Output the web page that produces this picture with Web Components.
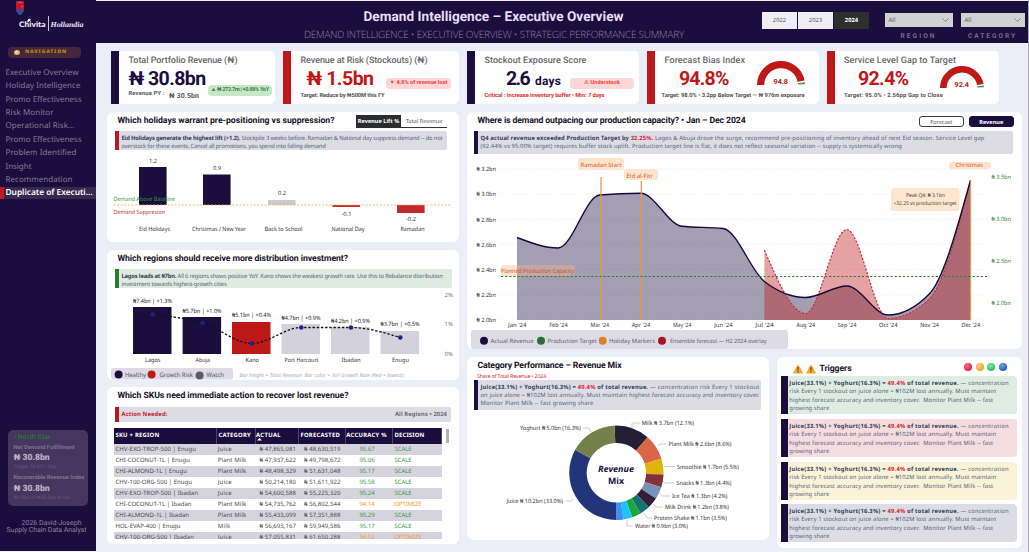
<!DOCTYPE html>
<html lang="en">
<head>
<meta charset="utf-8">
<title>Demand Intelligence - Executive Overview</title>
<style>
  html, body { margin: 0; height: 100%; }
  body {
    --navy: #1c0d3f;
    --red: #be1818;
    --head: Roboto, "Liberation Sans", sans-serif;
    --text: "Noto Sans", "Open Sans", sans-serif;
    background: #ebeef7;
    font-family: var(--text);
    font-size: 6px;
    overflow: hidden;
    text-rendering: geometricPrecision;
  }
</style>
</head>
<body>
<dash-app></dash-app>

<script>
const define = (name, html, setup) => {
  const template = document.createElement("template");
  template.innerHTML = html;
  customElements.define(name, class extends HTMLElement {
    constructor() {
      super();
      this._shadowRoot = this.attachShadow({ mode: "open" });
    }
    connectedCallback() {
      this._shadowRoot.replaceChildren(template.content.cloneNode(true));
      if (setup) setup(this, this._shadowRoot);
    }
  });
};

// svg text: x, baseline, label, width, extra attributes
const label = (x, y, str, w, extra = "") =>
  `<text x="${x}" y="${y}" textLength="${w}" lengthAdjust="spacingAndGlyphs" ${extra}>${str}</text>`;
const rect = (x, y, x2, y2, fill, extra = "") =>
  `<rect x="${x}" y="${y}" width="${x2 - x}" height="${y2 - y}" fill="${fill}" ${extra}/>`;
const line = (x, y, x2, y2, stroke, extra = "") =>
  `<line x1="${x}" y1="${y}" x2="${x2}" y2="${y2}" stroke="${stroke}" ${extra}/>`;

// monotone cubic through the points
const curve = (pts) => {
  const n = pts.length,
    d = [],
    m = [];
  for (let i = 0; i < n - 1; i++) {
    d.push((pts[i + 1][1] - pts[i][1]) / (pts[i + 1][0] - pts[i][0]));
  }
  for (let i = 1; i < n - 1; i++) {
    const a = d[i - 1], b = d[i];
    m[i] = a * b <= 0 ? 0 : Math.sign(a) * Math.min(Math.abs(a), Math.abs(b), Math.abs(a + b) / 4) * 2;
  }
  m[0] = (3 * d[0] - m[1]) / 2;
  m[n - 1] = (3 * d[n - 2] - m[n - 2]) / 2;
  let path = `M${pts[0]}`;
  for (let i = 0; i < n - 1; i++) {
    const h = (pts[i + 1][0] - pts[i][0]) / 3;
    path += `C${pts[i][0] + h},${pts[i][1] + m[i] * h} ${pts[i + 1][0] - h},${pts[i + 1][1] - m[i + 1] * h} ${pts[i + 1]}`;
  }
  return path;
};

const chartStyle = `<style>
  :host { display: block; font: 5.8px var(--text); }
  svg { display: block; overflow: visible; }
</style>`;

define("side-nav", `
  <style>
    :host { display: flex; flex-direction: column; width: 96px; height: 551px; background: var(--navy); color: #827b94; }
    .logo { display: block; height: 47px; }
    .tag {
      display: flex; align-items: center; gap: 5px; width: 67px; height: 11px; margin-left: 8px; padding-left: 6px;
      border-radius: 4px; background: #46263d; color: #b98d12; font: 900 5px/11px var(--text);
    }
    .dot { width: 6px; height: 5px; border-radius: 50%; background: radial-gradient(circle at 40% 40%, #ffe1a0, #cf8e35); }
    nav { margin-top: 8px; font-size: 8px; line-height: 13.37px; }
    nav div { height: 13.37px; padding-left: 5.5px; }
    nav .active { display: flex; box-sizing: border-box; height: 12px; margin-top: 1px; padding-left: 1.5px; border-left: 4px solid #c5161d; background: #35294f; color: #fff; font: 600 8.4px/12px var(--text); }
    .star {
      margin: auto 8px 0; box-sizing: border-box; height: 76px; padding: 2px 5.5px; border-radius: 5px;
      background: #46365f; color: #7d7190; font: 700 5.8px/8px var(--head);
    }
    .star b { display: block; color: #b9b1c5; font-size: 8.6px; line-height: 12px; }
    .star .name { height: 12px; line-height: 10px; color: #27752f; font-size: 6.8px; }
    .star .sub { height: 10px; color: #645479; font-weight: 400; font-size: 5px; line-height: 7px; }
    footer { position: relative; margin: 14px 0 9px; height: 22px; font: 7px/7.2px var(--head); color: #8b849b; }
    footer i { position: absolute; left: 10px; top: 2px; width: 7px; height: 7px; border-radius: 50%; background: #170a32; }
  </style>
  <div class="logo">
    <svg width="96" height="47">
      <path d="M16 1h8v8l-1 3h-6l-1-3z" fill="#c3162b"/><path d="M17 9q3 2 6 0l1 2-3 4h-2l-3-4z" fill="#314b9c"/>
      <path d="M18 2h4v1h-4M21 6h2v1h-2" fill="#df5360"/>
      <path d="M27.3 23c0-3 1.5-5 2.2-3.8 1.8-.8 1.7 1.6 0 1.8z" fill="#fff"/>
      <text x="19" y="27" textLength="26.5" lengthAdjust="spacingAndGlyphs" font-family="Lato" font-size="7.6" font-weight="900" fill="#f3f0f7">Chivita</text>
      <path d="M48.5 16v15" stroke="#c9c4d2"/>
      <text x="50.5" y="27" textLength="33" lengthAdjust="spacingAndGlyphs" font-family="Liberation Serif" font-size="7.5" font-style="italic" font-weight="bold" fill="#eeeaf3">Hollandia</text>
    </svg>
  </div>
  <div class="tag"><span class="dot"></span><fit-text w="42">NAVIGATION</fit-text></div>
  <nav>
    <div><fit-text w="73">Executive Overview</fit-text></div>
    <div><fit-text w="75">Holiday Intelligence</fit-text></div>
    <div><fit-text w="76">Promo Effectiveness</fit-text></div>
    <div><fit-text w="48">Risk Monitor</fit-text></div>
    <div><fit-text w="69">Operational Risk...</fit-text></div>
    <div><fit-text w="76">Promo Effectiveness</fit-text></div>
    <div><fit-text w="71">Problem Identified</fit-text></div>
    <div><fit-text w="26">Insight</fit-text></div>
    <div><fit-text w="67">Recommendation</fit-text></div>
    <div class="active"><fit-text w="87">Duplicate of Executi...</fit-text></div>
  </nav>
  <div class="star">
    <div class="name"><fit-text w="37">• North Star</fit-text></div>
    <fit-text w="61">Net Demand Fulfillment</fit-text>
    <b><fit-text w="36">₦ 30.8bn</fit-text></b>
    <div class="sub"><fit-text w="44">Target: 98.0% • Gap:</fit-text></div>
    <fit-text w="71">Recoverable Revenue Index</fit-text>
    <b style="margin-top:1px"><fit-text w="36">₦ 30.8bn</fit-text></b>
    <div class="sub"><fit-text w="57">₦1.5bn of ₦30.8bn at risk</fit-text></div>
  </div>
  <footer><i></i>
    <fit-text w="60" style="margin-left:21.5px">2026 David-Joseph</fit-text>
    <fit-text w="80" style="margin-left:6.5px">Supply Chain Data Analyst</fit-text>
  </footer>
`);

define("app-header", `
  <style>
    :host { display: flex; height: 43px; box-sizing: border-box; border-top: 1px solid #eee; background: var(--navy); }
    .titles { margin-left: 208px; width: 458px; }
    .title { padding: 7px 0 0 59.5px; font: 700 13.6px/18px var(--head); color: #e5dff2; }
    .sub { font: 300 10px/16px "Open Sans", var(--text); color: #8b839e; }
    .years { display: flex; gap: 1px; height: 16.5px; margin-top: 11px; }
    .years span { width: 35px; background: #f0eef5; color: #555; font: 5.8px/16.5px var(--text); text-align: center; }
    .years span:last-child { background: #2e2e2e; color: #fff; font-weight: 700; }
    .field { width: 68px; margin: 12px 0 0 15.5px; text-align: center; }
    .field + .field { width: 64px; margin-left: 8px; }
    .select { display: flex; justify-content: space-between; align-items: center; height: 14px; padding: 0 4px; background: #d1d1d1; color: #555; }
    .name { margin-top: 5px; font: 700 6.6px/8px var(--head); color: #786e8c; display: flex; justify-content: center; }
  </style>
  <div class="titles">
    <div class="title"><fit-text w="260">Demand Intelligence – Executive Overview</fit-text></div>
    <div class="sub"><fit-text w="380">DEMAND INTELLIGENCE • EXECUTIVE OVERVIEW • STRATEGIC PERFORMANCE SUMMARY</fit-text></div>
  </div>
  <div class="years"><span>2022</span><span>2023</span><span>2024</span></div>
  <div class="field">
    <div class="select">All<svg width="7" height="4"><path d="M.5.5l3 3 3-3" fill="none" stroke="#777" stroke-width=".8"/></svg></div>
    <div class="name"><fit-text w="36">REGION</fit-text></div>
  </div>
  <div class="field">
    <div class="select">All<svg width="7" height="4"><path d="M.5.5l3 3 3-3" fill="none" stroke="#777" stroke-width=".8"/></svg></div>
    <div class="name"><fit-text w="49">CATEGORY</fit-text></div>
  </div>
`);

define("kpi-card", `
  <style>
    :host {
      position: relative; display: block; box-sizing: border-box; height: 53px; padding: 4px 0 0 9.5px;
      border-left: 8px solid var(--tone, var(--navy)); border-radius: 0 5px 5px 0; background: #fff; color: #555;
    }
    .title { font: 500 9px/12px var(--head); color: #686868; }
    .row { display: flex; align-items: center; height: 24px; font: 700 19.5px/24px var(--head); color: var(--tone, var(--navy)); }
    .foot { display: flex; font: 700 5.8px/10px var(--head); color: var(--foot, #555); }
    ::slotted(kpi-gauge) { position: absolute; }
  </style>
  <div class="title"><slot name="title"></slot></div>
  <div class="row"><slot></slot></div>
  <div class="foot"><slot name="foot"></slot></div>
  <slot name="gauge"></slot>
`);

define("kpi-badge", `
  <style>
    :host {
      display: flex; justify-content: center; align-items: center; height: 11px; border-radius: 4px;
      background: #fdd7d7; color: #ee3a3a; font: 700 5.5px/11px var(--head);
    }
  </style>
  <slot></slot>
`);

define("kpi-gauge", `<style>:host { display: block; } svg { display: block; overflow: visible; }</style><svg></svg>`, (el, root) => {
  const r = +el.getAttribute("r"),
    val = el.getAttribute("value"),
    band = r * 0.3,
    mid = r - band / 2,
    svg = root.querySelector("svg"),
    at = (p) => [r - mid * Math.cos(p * Math.PI), r - mid * Math.sin(p * Math.PI)];
  svg.setAttribute("width", r * 2);
  svg.setAttribute("height", r);
  svg.innerHTML = `
    <path d="M${at(0)}A${mid} ${mid} 0 0 1 ${at(0.94)}" fill="none" stroke="#c01717" stroke-width="${band}"/>
    <path d="M${at(0.965)}A${mid} ${mid} 0 0 1 ${at(0.99)}" fill="none" stroke="#519452" stroke-width="${band}"/>
    ${label(r - 7.5, r - 1.5, val, 14.5, 'font-family="Roboto" font-weight="700" font-size="7" fill="#be1818"')}`;
});

define("dash-panel", `
  <style>
    :host { display: block; box-sizing: border-box; border-radius: 6px; background: #fff; overflow: hidden; }
    header { display: flex; justify-content: space-between; height: var(--head-height, 19px); padding: 0 12px 0 10.5px; box-sizing: border-box; }
    .title { font: 700 8.7px/19px var(--head); color: #16121f; }
    .tools { display: flex; }
  </style>
  <header><div class="title"><slot name="title"></slot></div><div class="tools"><slot name="tools"></slot></div></header>
  <slot></slot>
`);

define("toggle-pair", `
  <style>
    :host { display: flex; font: 5.6px/12px var(--text); text-align: center; }
    .on { width: 45px; background: #2b2c2e; color: #fff; font-weight: 700; }
    .off { width: 46px; box-sizing: border-box; border-bottom: 1px solid #333; color: #555; }
    :host([pill]) { gap: 4.5px; line-height: 9.5px; }
    :host([pill]) span { box-sizing: border-box; width: 45.5px; height: 11px; border: 1px solid #3b3e46; border-radius: 3px; padding-top: 1px; }
    :host([pill]) .on { background: var(--navy); border-color: var(--navy); }
  </style>
  <slot></slot>
`, (el, root) => {
  root.querySelector("slot").remove();
  el.getAttribute("items").split(",").forEach((item, i) => {
    const span = document.createElement("span");
    span.textContent = item;
    span.className = i === +el.getAttribute("active") ? "on" : "off";
    root.append(span);
  });
});

define("insight-note", `
  <style>
    :host {
      display: block; box-sizing: border-box; margin-left: 8px; padding: 2.5px 0 0 2.5px;
      border-left: 4px solid var(--bar, var(--navy)); border-radius: 0 2px 2px 0;
      background: var(--fill, #dddce5); color: #52627a; font: 5.8px/8.3px var(--text);
    }
  </style>
  <slot></slot>
`);

define("lift-chart", chartStyle + `<svg width="352" height="92" viewBox="107 150 352 92"></svg>`, (el, root) => {
  const bars = [
    [139, 167, 205, "Eid Holidays", 139, 31, "1.2", 163, "#1c0d3f"],
    [203, 174.5, 205, "Christmas / New Year", 192, 54, "0.9", 170, "#1c0d3f"],
    [268, 200, 205, "Back to School", 264.5, 38, "0.2", 195, "#cacace"],
    [332.5, 205, 207, "National Day", 331.5, 33, "-0.1", 216, "#c32a2e"],
    [397, 205, 213, "Ramadan", 400.5, 24, "-0.2", 221, "#c32a2e"],
  ];
  root.querySelector("svg").innerHTML = bars.map(([x, y, y2, name, tx, w, val, ty, fill]) =>
    rect(x, y, x + 27.6, y2, fill) +
    label(tx, 231, name, w, 'fill="#333"') +
    `<text x="${x + 14}" y="${ty}" text-anchor="middle" fill="#444">${val}</text>`
  ).join("") +
    line(113.5, 205, 452, 205, "#f3b45f", 'stroke-dasharray="2 1.6" stroke-width=".9"') +
    label(113.5, 201, "Demand Above Baseline", 61.5, 'fill="#3c9148"') +
    label(113.5, 214, "Demand Suppresion", 51.5, 'fill="#c8313a"');
});

define("region-chart", chartStyle + `<svg width="352" height="92" viewBox="107 288 352 92"></svg>`, (el, root) => {
  const bars = [
    [133, 307, "Lagos", 145, 15.5, "₦7.4bn | +1.3%", 303, "#1c0d3f"],
    [182.6, 317, "Abuja", 195.5, 14.5, "₦5.7bn | +1.0%", 313, "#1c0d3f"],
    [232, 322, "Kano", 245.5, 13.5, "₦5.1bn | +0.4%", 317, "#be1818"],
    [281.5, 324, "Port Harcourt", 284.5, 34, "₦4.7bn | +0.9%", 320.3, "#d3d1dc"],
    [331, 327, "Ibadan", 341.5, 19, "₦4.2bn | +0.9%", 323.3, "#d3d1dc"],
    [380.6, 331, "Enugu", 392, 17, "₦3.7bn | +0.5%", 326.3, "#d3d1dc"],
  ];
  const pts = [[152.7, 314.5], [202.5, 323], [252, 343.5], [301.3, 327.5], [351, 327.5], [400.3, 337.5]];
  root.querySelector("svg").innerHTML = bars.map(([x, y, name, tx, w, val, ty, fill]) =>
    rect(x, y, x + 38.5, 354, fill) +
    label(tx, 362, name, w, 'fill="#333"') +
    label(x, ty, val, 39, 'fill="#222"')
  ).join("") +
    `<path d="${curve(pts)}" fill="none" stroke="#111" stroke-width="1.3" stroke-dasharray="2.4 1.8"/>` +
    pts.map(([x, y]) => `<circle cx="${x}" cy="${y}" r="2.3" fill="#1a2587"/>`).join("") +
    label(444.5, 297, "2%", 8.5, 'fill="#777"') + label(444.5, 326, "1%", 8.5, 'fill="#777"') + label(444.5, 356, "0%", 8.5, 'fill="#777"') +
    rect(111, 368, 233, 379.5, "#dddce6", 'rx="3"') +
    `<circle cx="118.6" cy="374.5" r="4" fill="#1c0d3f"/><circle cx="151.6" cy="374.5" r="4" fill="#be1818"/><circle cx="199.6" cy="375.5" r="4" fill="#5c5b62"/>` +
    label(125, 377.3, "Healthy", 21, 'fill="#555" font-size="6.2"') +
    label(159.5, 377.3, "Growth Risk", 33.5, 'fill="#555" font-size="6.2"') +
    label(206.5, 377.3, "Watch", 17.5, 'fill="#555" font-size="6.2"') +
    label(239.5, 377, "Bar height = Total Revenue. Bar color = YoY Growth Rate (Red = lowest)", 164, 'fill="#aaa" font-style="italic" font-size="5.2"');
});

define("sku-table", `
  <style>
    :host { display: flex; gap: 3.5px; height: 111px; margin: 6px 0 0 6.5px; overflow: hidden; font: 6px/11.04px var(--text); color: #4a4a4a; }
    .grid { width: 328.5px; }
    .row { display: grid; grid-template-columns: 103px 39px 43px 47px 47px 49.5px; height: 11.04px; }
    .row:nth-child(even) { background: #d5d3dd; }
    .head { position: relative; height: 16px; background: var(--navy); color: #fff; font: 700 5.9px/14px var(--text); }
    .head svg { position: absolute; left: 143.5px; top: 10px; }
    .head > div { border-right: 1px solid #51426c; box-sizing: border-box; }
    .row > div { padding-left: 2px; }
    .row .num { display: flex; justify-content: flex-end; padding-right: 2.5px; }
    .row .acc { display: flex; justify-content: center; padding: 0 4px 0 0; }
    .ok { color: #3f9a47; }
    .warn { color: #f0a125; }
    .thumb { width: 3px; height: 14px; margin-top: 1px; background: #b5b2b5; }
  </style>
  <div class="grid">
    <div class="row head">
      <div><fit-text w="44">SKU + REGION</fit-text></div><div><fit-text w="32.5">CATEGORY</fit-text></div>
      <div style="padding-left:.5px"><fit-text w="25">ACTUAL</fit-text></div><div><fit-text w="39.5">FORECASTED</fit-text></div>
      <div style="padding-left:.8px"><fit-text w="40.5">ACCURACY %</fit-text></div><div><fit-text w="30">DECISION</fit-text></div>
      <svg width="5" height="3"><path d="M0 2.5L2.5 0 5 2.5z" fill="#fff"/></svg>
    </div>
  </div>
  <div class="thumb"></div>
`, (el, root) => {
  const rows = [
    ["CHV-EXO-TROP-500 | Enugu", 80.5, "Juice", "47,865,081", "48,630,519", "95.67"],
    ["CHI-COCONUT-1L | Enugu", 74.5, "Plant Milk", "47,937,622", "49,798,672", "95.06"],
    ["CHI-ALMOND-1L | Enugu", 71.5, "Plant Milk", "48,498,329", "51,631,048", "95.17"],
    ["CHV-100-ORG-500 | Enugu", 76.5, "Juice", "50,214,180", "51,611,922", "95.58"],
    ["CHV-EXO-TROP-500 | Ibadan", 82.5, "Juice", "54,600,588", "55,225,320", "95.24"],
    ["CHI-COCONUT-1L | Ibadan", 76, "Plant Milk", "54,735,762", "56,802,544", "94.14"],
    ["CHI-ALMOND-1L | Ibadan", 73.5, "Plant Milk", "55,433,099", "57,351,888", "95.29"],
    ["HOL-EVAP-400 | Enugu", 65, "Milk", "56,693,167", "59,949,586", "95.17"],
    ["CHV-100-ORG-500 | Ibadan", 78.5, "Juice", "57,055,831", "61,650,288", "94.52"],
  ];
  const widths = { Juice: 14, "Plant Milk": 28.5, Milk: 12.5 };
  root.querySelector(".grid").insertAdjacentHTML("beforeend", rows.map(([sku, w, cat, act, fc, acc]) => {
    const cls = acc < 95 ? "warn" : "ok";
    return `<div class="row">
      <div><fit-text w="${w}">${sku}</fit-text></div>
      <div style="padding-left:1.3px"><fit-text w="${widths[cat]}">${cat}</fit-text></div>
      <div class="num"><fit-text w="36.5">₦ ${act}</fit-text></div>
      <div class="num" style="padding-right:5px"><fit-text w="36.5">₦ ${fc}</fit-text></div>
      <div class="acc ${cls}"><fit-text w="15">${acc}</fit-text></div>
      <div class="${cls}">${cls === "ok" ? '<fit-text w="17">SCALE</fit-text>' : '<fit-text w="27">OPTIMIZE</fit-text>'}</div>
    </div>`;
  }).join(""));
});

define("demand-chart", chartStyle + `<svg width="555" height="195" viewBox="467 154 555 195"></svg>`, (el, root) => {
  const months = ["Jan", "Feb", "Mar", "Apr", "May", "Jun", "Jul", "Aug", "Sep", "Oct", "Nov", "Dec"];
  const x = (i) => 517 + i * 41.23;
  const actual = [237.5, 248, 195, 193.3, 226.3, 228.5, 281.5, 297.5, 286, 315, 294, 180].map((y, i) => [x(i), y]);
  const forecast = [250, 313.5, 229.5, 318.5, 299, 181].map((y, i) => [x(i + 6), y]);
  const pill = (a, b, c, d, fill = "#fde5cd") => rect(a, b, c, d, fill, 'rx="3"');
  let out = "";
  ["3.2", "3.0", "2.8", "2.6", "2.4", "2.2", "2.0"].forEach((v, i) => {
    const y = 169 + i * 25.15;
    out += line(500, y, 987, y, "#dedee2", 'stroke-dasharray="1 2" stroke-width=".6"') +
      label(476.5, y + 2.2, `₦ ${v}bn`, 19.5, 'fill="#333"');
  });
  ["3.5", "3.0", "2.5", "2.0"].forEach((v, i) => {
    out += label(991.5, 179.2 + i * 42, `₦ ${v}bn`, 19.5, 'fill="#35863c"');
  });
  out += `<path d="${curve(actual)}V320H517z" fill="#1c0d3f" fill-opacity=".4"/>
    <path d="${curve(forecast)}V320H${x(6)}z" fill="#c01c20" fill-opacity=".41"/>
    <path d="${curve(forecast)}" fill="none" stroke="#c7303a" stroke-width="1.2" stroke-dasharray="2.2 1.5"/>
    <path d="${curve(actual)}" fill="none" stroke="#160a3b" stroke-width="1.4"/>`;
  out += line(601, 177, 601, 320, "#e59a46", 'stroke-width="1.3"') +
    line(641.3, 181, 641.3, 320, "#e59a46", 'stroke-width="1.3"') +
    line(970.7, 180, 970.7, 320, "#e8a045", 'stroke-width="1"') +
    pill(578, 158, 624, 170) + label(580.5, 167, "Ramadan Start", 41, 'fill="#d3562f"') +
    pill(624, 169, 658, 180) + label(626.5, 178, "Eid al-Fitr", 26.5, 'fill="#d3562f"') +
    pill(949, 162, 991, 169.3) + label(955.5, 167.3, "Christmas", 27.5, 'fill="#d3562f"') +
    rect(501, 265, 575, 276, "#f5b58a", 'rx="3" fill-opacity=".38"') +
    label(501, 273.3, "Planned Production Capacity", 73, 'fill="#cc5136"') +
    line(501, 276.5, 987, 276.5, "#347a3a", 'stroke-dasharray="2.3 1.8"') +
    pill(891, 188, 959.5, 211, "#fce6ce") +
    label(906, 197, "Peak Q4: ₦ 3.1bn", 39, 'fill="#444" font-size="5.2"') +
    label(893.5, 205.3, "+32.25 vs production target", 63, 'fill="#444" font-size="5.2"');
  months.forEach((m, i) => {
    out += label(x(i) - 9, 327, `${m} '24`, 18.5, 'fill="#333"');
  });
  out += rect(471, 330, 788, 349, "#dddce6", 'rx="3"');
  [["Actual Revenue", 484, 490.5, 43, "#1c0d3f"], ["Production Target", 541, 547.5, 49.5, "#2c6e37"],
    ["Holiday Markers", 602.7, 609, 46, "#d88325"], ["Ensemble forecast — H2 2024 overlay", 662, 670, 96.5, "#a9151c"]
  ].forEach(([name, cx, tx, w, fill]) => {
    out += `<circle cx="${cx}" cy="340.8" r="4" fill="${fill}"/>` + label(tx, 343.2, name, w, 'fill="#5d5d66"');
  });
  root.querySelector("svg").innerHTML = out;
});

define("mix-chart", chartStyle + `<svg width="302" height="130" viewBox="467 410 302 130"></svg>`, (el, root) => {
  const slices = [
    [12.1, "#241f36"], [8.6, "#da6548"], [5.5, "#dcb40c"], [4.4, "#84303a"], [4.2, "#7892b7"], [3.8, "#351d3a"],
    [3.5, "#13746d"], [3.1, "#1fa63f"], [3, "#1fc3f5"], [2.5, "#3f8ff5"], [33, "#22357a"], [16.3, "#74814d"],
  ];
  const labels = [
    ["Milk ₦ 3.7bn (12.1%)", 641.7, 422.8, 52.3, "M632 428.5v-5.5h8"],
    ["Plant Milk ₦ 2.6bn (8.6%)", 668.5, 444, 63, "M658 446l2-2h6"],
    ["Smoothie ₦ 1.7bn (5.5%)", 677, 466.3, 62, "M664 466.5h11"],
    ["Snacks ₦ 1.3bn (4.4%)", 676.5, 483, 55, "M663 481l2 2h9"],
    ["Ice Tea ₦ 1.3bn (4.2%)", 672, 496, 55.5, "M659 493l3 3h8"],
    ["Milk Drink ₦ 1.2bn (3.8%)", 665, 507, 64, "M653 504l3 3h7"],
    ["Protein Shake ₦ 1.1bn (3.5%)", 654, 518, 73, "M644 513l3 5h5"],
    ["Water ₦ 0.9bn (3.0%)", 635, 526, 53, "M627 520v6h6"],
    ["Yoghurt ₦ 5.0bn (16.3%)", 520, 428, 61, "M583 428h6l2 4"],
    ["Juice ₦ 10.2bn (33.0%)", 506.5, 501, 56.5, "M565 501h6l2-2"],
  ];
  let angle = (-2.2 * Math.PI) / 180,
    out = "";
  const at = (a, r) => `${616.4 + r * Math.sin(a)} ${472.8 - r * Math.cos(a)}`;
  slices.forEach(([pct, fill]) => {
    const end = angle + (pct / 100) * 2 * Math.PI;
    out += `<path d="M${at(angle, 47.2)}A47.2 47.2 0 0 1 ${at(end, 47.2)}L${at(end, 29.7)}A29.7 29.7 0 0 0 ${at(angle, 29.7)}z" fill="${fill}"/>`;
    angle = end;
  });
  labels.forEach(([str, x, y, w, d]) => {
    out += `<path d="${d}" fill="none" stroke="#bbb" stroke-width=".7"/>` + label(x, y + 2.2, str, w, 'fill="#333"');
  });
  out += label(598, 472, "Revenue", 36, 'font-size="8.6" font-weight="700" font-style="italic" fill="#1c0d3f"') +
    label(608, 484, "Mix", 16, 'font-size="8.6" font-weight="700" fill="#1c0d3f"');
  root.querySelector("svg").innerHTML = out;
});

define("trigger-list", `
  <style>
    :host { display: grid; row-gap: 5px; margin: 0 5px 0 3.5px; }
    insight-note { height: 38px; margin: 0; padding: 3px 0 0 1.8px; border-left-width: 7.7px; border-radius: 0 4px 4px 0; line-height: 8.3px; }
    insight-note:last-child { margin-top: -1px; }
    b { color: #2e4260; }
    em { color: #d32632; font-style: normal; }
  </style>
`, (el, root) => {
  ["#dfece2", "#f5dcdf", "#faf3d8", "#dddce5"].forEach((fill) => {
    root.innerHTML += `<insight-note style="--fill:${fill}">
      <fit-text w="219.5"><b>Juice(33.1%) + Yoghurt(16.3%) = <em>49.4%</em> of total revenue.</b> — concentration</fit-text>
      <fit-text w="207">risk Every 1 stockout on juice alone = ₦102M lost annually. Must maintain</fit-text>
      <fit-text w="204">highest forecast accuracy and inventory cover. &nbsp;Monitor Plant Milk -- fast</fit-text>
      <fit-text w="40">growing share</fit-text>
    </insight-note>`;
  });
});

define("dash-app", `
  <style>
    :host { display: flex; box-sizing: border-box; width: 1029px; height: 552px; border-right: 1px solid #a9a8b3; overflow: hidden; }
    main { flex: 1; min-width: 0; }
    b { color: #2e4260; }
    em { color: #d32632; font-style: normal; }
    .kpis { display: grid; grid-template-columns: 164px 176px 172px 171.5px 172px; gap: 8px; padding: 8px 0 8px 15px; }
    .danger { --tone: var(--red); }
    .body { display: grid; grid-template-columns: 352px 555px; gap: 8px; padding-left: 11px; }
    .left { display: grid; grid-template-rows: 130px 130px 156px; row-gap: 8px; }
    .left > :last-child { margin-top: -1px; }
    .right { display: grid; grid-template-rows: 237px 191px; row-gap: 8px; }
    .pair { display: grid; grid-template-columns: 302px 245px; column-gap: 8px; align-items: start; }
    .action { display: flex; justify-content: space-between; padding-right: 4px; color: #c2242c; font-weight: 700; line-height: 9px; }
    .action span { color: #6b6b72; }
    .warn { display: flex; align-items: center; gap: 4px; padding-left: 5px; height: 24px; line-height: 24px; }
    .dots { display: flex; gap: 3.6px; padding: 6px 3px 0 0; }
    .dots i { width: 8px; height: 8px; border-radius: 50%; background: radial-gradient(circle at 40% 35%, var(--hi), var(--c) 65%); }
    .subtitle { color: #d03036; margin-left: 10px; height: 6px; font: 5.3px/5px var(--text); }
  </style>
  <side-nav></side-nav>
  <main>
    <app-header></app-header>
    <div class="kpis">
      <kpi-card>
        <fit-text slot="title" w="109">Total Portfolio Revenue (₦)</fit-text>
        <fit-text w="77">₦ 30.8bn</fit-text>
        <kpi-badge style="width:64.5px;margin:22px 0 0 2px;background:#c7e7c9;color:#377d3c"><fit-text w="58">▲ ₦ 272.7m | +0.89% YoY</fit-text></kpi-badge>
        <fit-text slot="foot" w="36" style="margin-top:-2.5px">Revenue PY :</fit-text>
        <fit-text slot="foot" w="30" style="margin-left:4.5px;font-size:7px">₦ 30.5bn</fit-text>
      </kpi-card>
      <kpi-card class="danger">
        <fit-text slot="title" w="127">Revenue at Risk (Stockouts) (₦)</fit-text>
        <fit-text w="67" style="margin-left:6px">₦ 1.5bn</fit-text>
        <kpi-badge style="width:65px;margin:8px 0 0 12.5px"><fit-text w="58">▼ 4.8% of revenue lost</fit-text></kpi-badge>
        <fit-text slot="foot" w="84">Target: Reduce by ₦500M this FY</fit-text>
      </kpi-card>
      <kpi-card style="--foot:#e32d2d">
        <fit-text slot="title" w="102">Stockout Exposure Score</fit-text>
        <fit-text w="23" style="margin-left:21.5px">2.6</fit-text>
        <fit-text w="26" style="margin:3px 0 0 6px;font-size:12px">days</fit-text>
        <kpi-badge style="width:64px;margin:8px 0 0 9px"><fit-text w="36">⚠ Understock</fit-text></kpi-badge>
        <fit-text slot="foot" w="120">Critical : Increase inventory buffer • Min: 7 days</fit-text>
      </kpi-card>
      <kpi-card class="danger">
        <fit-text slot="title" w="80.5">Forecast Bias Index</fit-text>
        <fit-text w="49.5" style="margin-left:14.5px">94.8%</fit-text>
        <kpi-gauge slot="gauge" r="24" value="94.8" style="left:102px;top:10px"></kpi-gauge>
        <fit-text slot="foot" w="143" style="margin-left:-3px">Target: 98.0% • 3.2pp Below Target — ₦ 976m exposure</fit-text>
      </kpi-card>
      <kpi-card class="danger">
        <fit-text slot="title" w="112">Service Level Gap to Target</fit-text>
        <fit-text w="50.5" style="margin-left:14px">92.4%</fit-text>
        <kpi-gauge slot="gauge" r="22" value="92.4" style="left:105px;top:15px"></kpi-gauge>
        <fit-text slot="foot" w="99">Target: 95.0% • 2.56pp Gap to Close</fit-text>
      </kpi-card>
    </div>
    <div class="body">
      <div class="left">
        <dash-panel>
          <fit-text slot="title" w="217">Which holidays warrant pre-positioning vs suppression?</fit-text>
          <toggle-pair slot="tools" items="Revenue Lift %,Total Revenue" active="0" style="margin-top:3px;height:12.5px"></toggle-pair>
          <insight-note style="--bar:#b8181f;width:332px;height:19px">
            <fit-text w="321"><b>Eid Holidays generate the highest lift (+1.2).</b> Stockpile 3 weeks before. Ramadan &amp; National day suppress demand -- do not</fit-text>
            <fit-text w="204">overstock for these events. Cancel all promotions, you spend into falling demand</fit-text>
          </insight-note>
          <lift-chart></lift-chart>
        </dash-panel>
        <dash-panel>
          <fit-text slot="title" w="230.5">Which regions should receive more distribution investment?</fit-text>
          <insight-note style="--bar:#2c7a35;--fill:#dfebe0;width:336.5px;height:19px">
            <fit-text w="321"><b>Lagos leads at ₦7bn.</b> All 6 regions shows positive YoY. Kano shows the weakest growth rate. Use this to Rebalance distribution</fit-text>
            <fit-text w="105">investment towards highest-growth cities</fit-text>
          </insight-note>
          <region-chart></region-chart>
        </dash-panel>
        <dash-panel style="--head-height:20px">
          <fit-text slot="title" w="231">Which SKUs need immediate action to recover lost revenue?</fit-text>
          <insight-note style="--bar:#b8181f;width:336px;height:15px">
            <div class="action"><fit-text w="46">Action Needed:</fit-text><span><fit-text w="52">All Regions • 2024</fit-text></span></div>
          </insight-note>
          <sku-table></sku-table>
        </dash-panel>
      </div>
      <div class="right">
        <dash-panel>
          <fit-text slot="title" w="268">Where is demand outpacing our production capacity? • Jan – Dec 2024</fit-text>
          <toggle-pair slot="tools" pill items="Forecast,Revenue" active="1" style="margin:4px -4px 0 0"></toggle-pair>
          <insight-note style="width:539px;height:23px;margin-left:7px">
            <fit-text w="504"><b>Q4 actual revenue exceeded Production Target by <em>32.25%.</em></b> Lagos &amp; Abuja drove the surge, recommend pre-positioning of inventory ahead of next Eid season. Service Level gap</fit-text>
            <fit-text w="421.5">(92.44% vs 95.00% target) requires buffer stock uplift. Production target line is flat, it does not reflect seasonal variation -- supply is systemically wrong</fit-text>
          </insight-note>
          <demand-chart></demand-chart>
        </dash-panel>
        <div class="pair">
          <dash-panel style="height:183px;--head-height:17px">
            <fit-text slot="title" w="144">Category Performance – Revenue Mix</fit-text>
            <div class="subtitle"><fit-text w="69">Share of Total Revenue • 2024</fit-text></div>
            <insight-note style="width:287px;height:30px;margin-left:7px">
              <fit-text w="279"><b>Juice(33.1%) + Yoghurt(16.3%) = <em>49.4%</em> of total revenue.</b> — concentration risk Every 1 stockout</fit-text>
              <fit-text w="279">on juice alone = ₦102M lost annually. Must maintain highest forecast accuracy and inventory cover.</fit-text>
              <fit-text w="113">Monitor Plant Milk -- fast growing share</fit-text>
            </insight-note>
            <mix-chart></mix-chart>
          </dash-panel>
          <dash-panel style="height:191px">
            <div slot="title" class="warn">
              <svg width="23" height="10"><g id="w"><path d="M5 1L9.5 9H.5z" fill="#f3a834" stroke="#f3a834" stroke-linejoin="round"/><path d="M5 3v3.4M5 7.3v1.2" stroke="#4b3b35" stroke-width="1.1"/></g><use href="#w" x="13"/></svg>
              <fit-text w="32">Triggers</fit-text>
            </div>
            <div slot="tools" class="dots">
              <i style="--hi:#f77588;--c:#dc2345"></i><i style="--hi:#fbd382;--c:#eaa32a"></i><i style="--hi:#82edae;--c:#30bd6f"></i><i style="--hi:#6ba2ec;--c:#2862c2"></i>
            </div>
            <trigger-list></trigger-list>
          </dash-panel>
        </div>
      </div>
    </div>
  </main>
`);

// one line of text, tracked out to the width given in "w"
class FitText extends HTMLElement {
  constructor() {
    super();
    this.attachShadow({ mode: "open" }).innerHTML =
      `<style>:host { display: block; white-space: nowrap; }</style><slot></slot>`;
  }
  connectedCallback() {
    const range = document.createRange();
    range.selectNodeContents(this);
    const width = range.getBoundingClientRect().width,
      gap = (this.getAttribute("w") - width) / this.textContent.length;
    this.style.letterSpacing = `${gap.toFixed(3)}px`;
  }
}
customElements.define("fit-text", FitText);
</script>
</body>
</html>
